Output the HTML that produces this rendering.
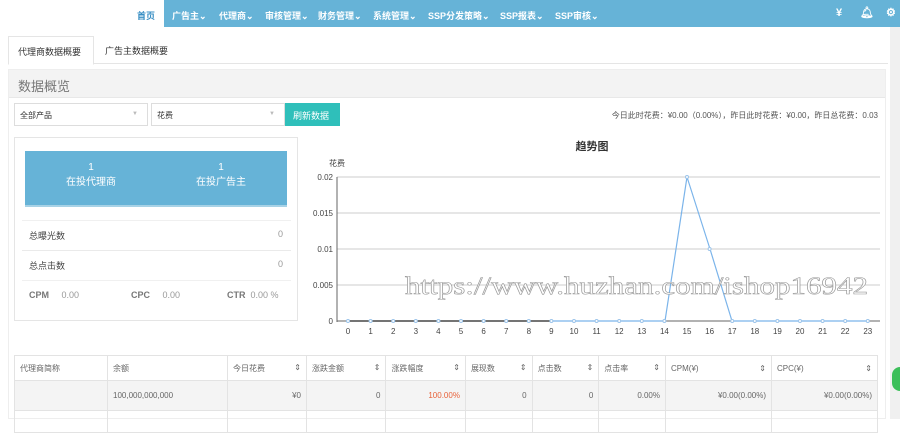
<!DOCTYPE html>
<html><head><meta charset="utf-8"><style>
*{margin:0;padding:0;box-sizing:border-box}
body{width:900px;height:419px;overflow:hidden;background:#fff;font-family:"Liberation Sans","Noto Sans CJK SC",sans-serif;font-size:9px;color:#555;position:relative}
.nav{position:absolute;left:164px;top:0;width:736px;height:27px;background:#66b3d7}
.nav span{position:absolute;top:9px;color:#fff;font-size:9px;font-weight:bold}
.home{position:absolute;left:137px;top:9px;color:#3a8fc4;font-size:9px;font-weight:bold}
.sb{position:absolute;left:890px;top:27px;width:10px;height:392px;background:#f0f0f0}
.abs{position:absolute}
.tabs{position:absolute;left:8px;top:36px;width:880px;height:28px;border-bottom:1px solid #e5e5e5}
.panel{position:absolute;left:8px;top:69px;width:878px;height:350px;background:#fff;border:1px solid #eee}
.ph{height:28px;background:#f3f3f3;border-bottom:1px solid #e8e8e8;font-size:13px;color:#777;padding:6px 9px}
.sel{position:absolute;top:103px;height:23px;border:1px solid #ddd;background:#fff;padding:6px 5px;font-size:8px;color:#333}
.sel:after{content:"▼";position:absolute;right:9px;top:7px;font-size:6px;color:#bbb}
td{border:1px solid #e3e3e3;font-size:8px;color:#666;padding:0 5px;height:22px}
</style></head><body>
<div class="home">首页</div>
<div class="nav">
<span style="left:8px">广告主⌄</span><span style="left:55px">代理商⌄</span><span style="left:101px">审核管理⌄</span><span style="left:154px">财务管理⌄</span><span style="left:209px">系统管理⌄</span><span style="left:264px">SSP分发策略⌄</span><span style="left:336px">SSP报表⌄</span><span style="left:391px">SSP审核⌄</span>
<span style="left:672px;top:7px;font-size:11px">¥</span><span style="left:696px;top:6px;font-size:11px">🔔︎</span><span style="left:722px;top:6px;font-size:11px">⚙</span>
</div>
<div class="sb"></div>
<div class="tabs">
<div class="abs" style="left:0;top:0;width:86px;height:29px;border:1px solid #e5e5e5;border-bottom:1px solid #fff;background:#fff;padding:8px 9px;color:#333">代理商数据概要</div>
<div class="abs" style="left:97px;top:8px;color:#333">广告主数据概要</div>
</div>
<div class="panel"><div class="ph">数据概览</div></div>
<div class="sel" style="left:14px;width:134px">全部产品</div>
<div class="sel" style="left:151px;width:134px">花费</div>
<div class="abs" style="left:285px;top:103px;width:55px;height:23px;background:#2fbfba;color:#fff;padding:6px 8px">刷新数据</div>
<div class="abs" style="right:22px;top:110px;font-size:8px;color:#555">今日此时花费：¥0.00（0.00%），昨日此时花费：¥0.00，昨日总花费：0.03</div>
<div class="abs" style="left:14px;top:137px;width:284px;height:184px;border:1px solid #e5e5e5"></div>
<div class="abs" style="left:25px;top:151px;width:262px;height:56px;background:#66b3d7;border-bottom:2px solid #a7d2e6;color:#fff;font-size:10px">
<div class="abs" style="left:40px;top:11px;width:52px;text-align:center">1<br>在投代理商</div>
<div class="abs" style="left:170px;top:11px;width:52px;text-align:center">1<br>在投广告主</div>
</div>
<div class="abs" style="left:22px;top:220px;width:269px;border-top:1px solid #f0f0f0"></div>
<div class="abs" style="left:22px;top:250px;width:269px;border-top:1px solid #eaeaea"></div>
<div class="abs" style="left:22px;top:280px;width:269px;border-top:1px solid #f0f0f0"></div>
<div class="abs" style="left:29px;top:229px;color:#444">总曝光数</div><div class="abs" style="left:278px;top:229px;color:#999">0</div>
<div class="abs" style="left:29px;top:259px;color:#444">总点击数</div><div class="abs" style="left:278px;top:259px;color:#999">0</div>
<div class="abs" style="left:29px;top:290px;color:#777"><b>CPM</b>&nbsp;&nbsp;&nbsp;&nbsp;&nbsp;<span style="color:#999">0.00</span></div>
<div class="abs" style="left:131px;top:290px;color:#777"><b>CPC</b>&nbsp;&nbsp;&nbsp;&nbsp;&nbsp;<span style="color:#999">0.00</span></div>
<div class="abs" style="left:227px;top:290px;color:#777"><b>CTR</b>&nbsp;&nbsp;<span style="color:#999">0.00 %</span></div>
<svg class="abs" style="left:300px;top:135px" width="590" height="205" font-family="Liberation Sans" font-size="8" fill="#444">
<text x="292" y="15" font-size="11" font-weight="bold" text-anchor="middle" fill="#333" font-family="Liberation Sans,Noto Sans CJK SC">趋势图</text>
<text x="29" y="31" font-family="Liberation Sans,Noto Sans CJK SC">花费</text>
<g stroke="#ccc"><line x1="37" y1="42" x2="580" y2="42"/><line x1="37" y1="78" x2="580" y2="78"/><line x1="37" y1="114" x2="580" y2="114"/><line x1="37" y1="150" x2="580" y2="150"/></g>
<line x1="37" y1="42" x2="37" y2="187" stroke="#666"/>
<line x1="37" y1="186" x2="580" y2="186" stroke="#666"/>
<g text-anchor="end"><text x="33" y="45">0.02</text><text x="33" y="81">0.015</text><text x="33" y="117">0.01</text><text x="33" y="153">0.005</text><text x="33" y="189">0</text></g>
<g text-anchor="middle" id="xl"></g>
<polyline fill="none" stroke="#222" stroke-width="1.2" points="48,186 251,186"/>
<polyline fill="none" stroke="#7bb4ea" stroke-width="1.2" points="251,186 365,186 387,42 410,114 432,186 568,186"/>
<text x="105" y="159" font-size="25" textLength="463" lengthAdjust="spacingAndGlyphs" fill="#fff" stroke="#999" stroke-width=".6" font-family="Liberation Serif">https://www.huzhan.com/ishop16942</text>
<g id="pts" fill="#fff" stroke="#9cc4ea"></g>
</svg>
<script>
var g=document.getElementById('xl'),p=document.getElementById('pts');
for(var i=0;i<24;i++){var x=48+i*22.6;g.innerHTML+='<text x="'+x+'" y="199">'+i+'</text>';
var y=i==15?42:(i==16?114:186);p.innerHTML+='<circle cx="'+x+'" cy="'+y+'" r="1.5"/>';}
</script>
<table class="abs" style="left:14px;top:355px;width:864px;border-collapse:collapse">
<tr style="height:25px"><td style="width:93px">代理商简称</td><td style="width:120px">余额</td><td style="width:79px">今日花费<span style="float:right">⇕</span></td><td>涨跌金额<span style="float:right">⇕</span></td><td>涨跌幅度<span style="float:right">⇕</span></td><td>展现数<span style="float:right">⇕</span></td><td>点击数<span style="float:right">⇕</span></td><td>点击率<span style="float:right">⇕</span></td><td style="width:106px">CPM(¥)<span style="float:right">⇕</span></td><td style="width:106px">CPC(¥)<span style="float:right">⇕</span></td></tr>
<tr style="background:#f4f4f4;height:30px"><td></td><td>100,000,000,000</td><td style="text-align:right">¥0</td><td style="text-align:right">0</td><td style="text-align:right;color:#e8623a">100.00%</td><td style="text-align:right">0</td><td style="text-align:right">0</td><td style="text-align:right">0.00%</td><td style="text-align:right">¥0.00(0.00%)</td><td style="text-align:right">¥0.00(0.00%)</td></tr>
<tr><td></td><td></td><td></td><td></td><td></td><td></td><td></td><td></td><td></td><td></td></tr>
</table>
<div class="abs" style="left:892px;top:367px;width:16px;height:24px;border-radius:12px;background:#3cbf5a"></div>
</body></html>
